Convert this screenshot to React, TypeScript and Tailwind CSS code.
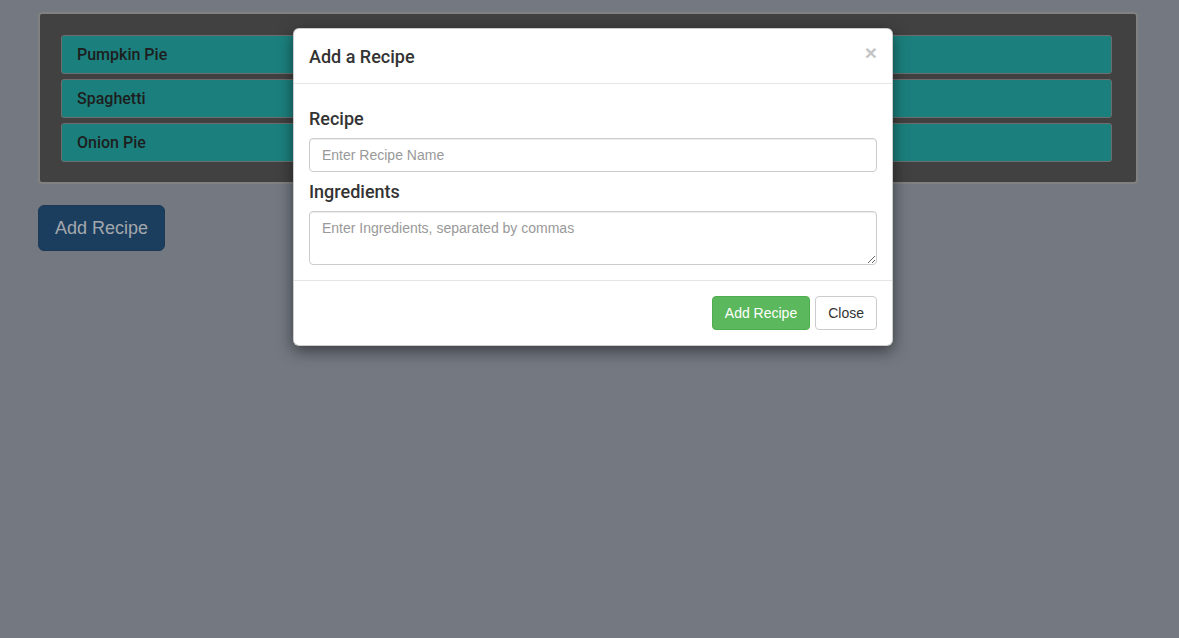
import React from "react";

const recipes = ["Pumpkin Pie", "Spaghetti", "Onion Pie"];

const heading = { fontFamily: 'Roboto, "Liberation Sans", Arial, sans-serif' };

export default function App() {
  return (
    <div
      className="relative min-h-[638px] w-full bg-[#737881] text-[14px] text-[#333]"
      style={{ fontFamily: '"Liberation Sans", Arial, sans-serif' }}
    >
      <div className="pl-[38px] pr-[41px] pt-[12px]">
        {/* recipe list */}
        <div className="rounded-[4px] border-2 border-[#818181] bg-[#414141] pl-[21px] pr-[24px] pt-[21px] pb-[20px]">
          <div className="flex flex-col gap-[5px]">
            {recipes.map((r) => (
              <div
                key={r}
                style={heading}
                className="flex h-[39px] items-center rounded-[3px] border border-[#6d6d6d] bg-[#1b807d] px-[15px] pt-[1px] text-[16px] font-medium text-[#1d1d1d]"
              >
                {r}
              </div>
            ))}
          </div>
        </div>

        <button className="mt-[21px] h-[46px] rounded-[6px] border border-[#1a3a58] bg-[#1c3e5e] px-[16px] text-[18px] text-[#a3a8ad]">
          Add Recipe
        </button>
      </div>

      {/* modal */}
      <div className="absolute left-[293px] top-[28px] w-[600px] rounded-[6px] border border-black/20 bg-white shadow-[0_5px_15px_rgba(0,0,0,0.5)]">
        <div className="flex h-[55px] items-center justify-between border-b border-[#e5e5e5] px-[15px]">
          <h4 style={heading} className="text-[18px] font-medium leading-[25px] text-[#333]">
            Add a Recipe
          </h4>
          <span className="-mt-[7px] text-[21px] font-bold leading-none text-[#c4c4c4]">×</span>
        </div>

        <div className="px-[15px] pb-[15px] pt-[15px]">
          <h4 style={heading} className="mt-[10px] mb-[9px] text-[18px] font-medium leading-[20px] text-[#333]">
            Recipe
          </h4>
          <input
            className="block h-[34px] w-full rounded-[4px] border border-[#ccc] px-[12px] text-[14px] placeholder:text-[#999] shadow-[inset_0_1px_1px_rgba(0,0,0,0.075)] outline-none"
            placeholder="Enter Recipe Name"
          />
          <h4 style={heading} className="mt-[10px] mb-[9px] text-[18px] font-medium leading-[20px] text-[#333]">
            Ingredients
          </h4>
          <textarea
            className="block h-[54px] w-full rounded-[4px] border border-[#ccc] px-[12px] py-[6px] text-[14px] leading-[20px] placeholder:text-[#999] shadow-[inset_0_1px_1px_rgba(0,0,0,0.075)] outline-none"
            placeholder="Enter Ingredients, separated by commas"
          />
        </div>

        <div className="flex justify-end gap-[5px] border-t border-[#e5e5e5] p-[15px]">
          <button className="h-[34px] rounded-[4px] border border-[#4cae4c] bg-[#5cb85c] px-[12px] text-[14px] text-white">
            Add Recipe
          </button>
          <button className="h-[34px] rounded-[4px] border border-[#ccc] bg-white px-[12px] text-[14px] text-[#333]">
            Close
          </button>
        </div>
      </div>
    </div>
  );
}
